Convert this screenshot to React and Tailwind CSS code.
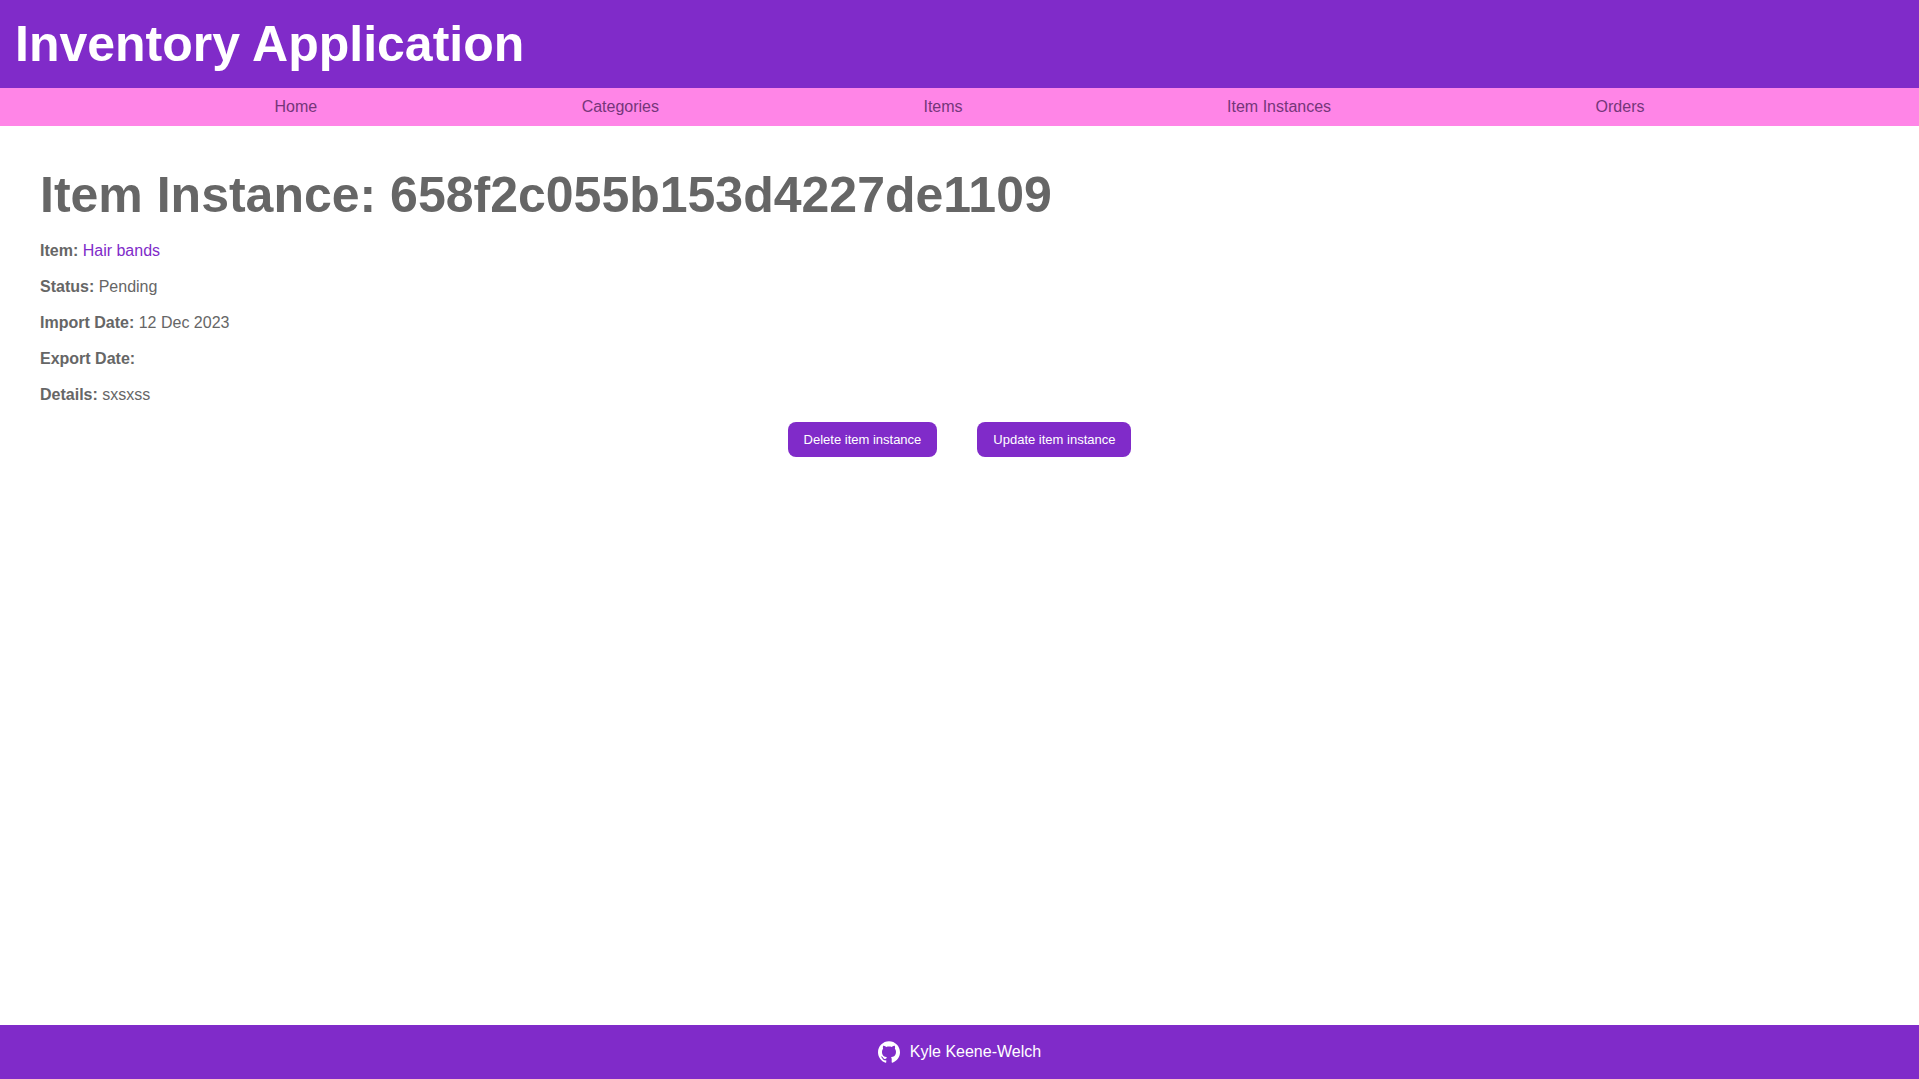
import { SiGithub } from "react-icons/si";

const links = ["Home", "Categories", "Items", "Item Instances", "Orders"];
const fields = [
  ["Status", "Pending"],
  ["Import Date", "12 Dec 2023"],
  ["Export Date", ""],
  ["Details", "sxsxss"],
];
const actions = ["Delete item instance", "Update item instance"];

export default function App() {
  return (
    <div className="flex min-h-screen flex-col bg-white font-['Liberation_Sans',Arial,sans-serif] text-base leading-[18px] text-[#666666]">
      <header className="bg-[#802bc9] p-[15px] text-white">
        <p className="text-[50px] leading-[58px] font-bold">Inventory Application</p>
      </header>
      <nav className="bg-[#ff85e7] p-2.5">
        <ul className="flex justify-evenly">
          {links.map((l) => (
            <li key={l}><a href="#" className="text-[#75367a]">{l}</a></li>
          ))}
        </ul>
      </nav>
      <main className="flex grow flex-col gap-[18px] p-10">
        <h1 className="text-[50px] leading-[58px] font-bold">Item Instance: 658f2c055b153d4227de1109</h1>
        <p><strong>Item:</strong> <a href="#" className="text-[#802bc9]">Hair bands</a></p>
        {fields.map(([k, v]) => (
          <p key={k}><strong>{k}:</strong> {v}</p>
        ))}
        <div className="flex justify-center gap-10">
          {actions.map((a) => (
            <button key={a} type="button" className="rounded-lg bg-[#802bc9] px-4 py-2.5 text-[13px] leading-[15px] font-medium text-white">{a}</button>
          ))}
        </div>
      </main>
      <footer className="flex justify-center bg-[#802bc9] p-[15px] text-white">
        <a href="#" className="flex items-center gap-2.5 leading-6"><SiGithub size={22} />Kyle Keene-Welch</a>
      </footer>
    </div>
  );
}
